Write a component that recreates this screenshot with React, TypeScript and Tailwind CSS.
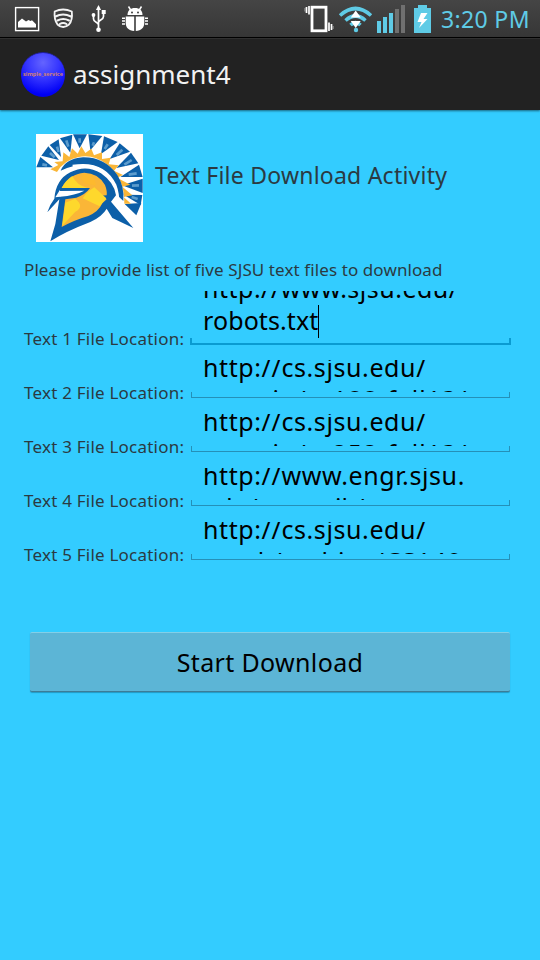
import React from "react";

const FIELDS = [
  { label: "Text 1 File Location:", lines: ["http://www.sjsu.edu/", "robots.txt"], active: true, tracking: "tracking-[0.1px]" },
  { label: "Text 2 File Location:", lines: ["http://cs.sjsu.edu/", "~austin/cs188-fall13/"], active: false, tracking: "tracking-[0.95px]" },
  { label: "Text 3 File Location:", lines: ["http://cs.sjsu.edu/", "~austin/cs252-fall13/"], active: false, tracking: "tracking-[0.95px]" },
  { label: "Text 4 File Location:", lines: ["http://www.engr.sjsu.", "edu/~sestnik/"], active: false, tracking: "tracking-[0.1px]" },
  { label: "Text 5 File Location:", lines: ["http://cs.sjsu.edu/", "~mak/archive/CS149"], active: false, tracking: "tracking-[1.050px]" },
];

function LeftIcons() {
  return (
    <svg className="block h-[37px] w-[160px]" viewBox="0 0 160 37" fill="none">
      <rect x="15.6" y="7.6" width="23" height="23" stroke="#fff" strokeWidth="1.4" />
      <path d="M18 27.5V22l4-3.5 4 3 2.500-1.500 2 1 1.500-.8 4 4v3.300z" fill="#fff" />
      <g stroke="#f4f4f4" strokeLinecap="round">
        <path d="M54.700 11.500Q63 7.500 71.800 11.500Q72.800 20 69 24.500Q66 27 63.200 27Q60 27 57.500 24.500Q53.800 19 54.700 11.500Z" strokeWidth="1.800" />
        <path d="M55.500 16.500Q63 12.500 71 16.500" strokeWidth="2" />
        <path d="M57.500 20.500Q63.200 17.500 69 20.500" strokeWidth="2" />
        <path d="M59.800 24Q63.200 21.800 66.500 24" strokeWidth="2" />
      </g>
      <g stroke="#fff" strokeWidth="1.700">
        <path d="M98.500 9v20M98.500 25c0-3-5-2.500-5-6v-3M98.500 22.500c0-2.500 5-2.500 5-6V12" />
        <path d="M98.500 5l-2.600 5h5.200z" fill="#fff" stroke="none" />
        <circle cx="98.500" cy="29.700" r="2.300" fill="#fff" stroke="none" />
        <circle cx="93.500" cy="15" r="1.900" fill="#fff" stroke="none" />
        <rect x="101.700" y="10" width="4" height="4" fill="#fff" stroke="none" />
      </g>
      <g fill="#fff">
        <path d="M127.500 15c0-4.500 3-7 7.500-7s7.500 2.500 7.500 7z" />
        <path d="M128.500 6.500l2.500 4M141.500 6.500l-2.500 4" stroke="#fff" strokeWidth="1.500" />
        <path d="M125.700 16.500h8.500v14.500c-5.500 0-8.500-3.500-8.500-8.200zM135.800 16.500h8.500v6.300c0 4.700-3 8.200-8.500 8.200z" />
        <path d="M122 18.300h3M122 21.100h3M122 23.900h3M145 18.300h3M145 21.100h3M145 23.900h3" stroke="#fff" strokeWidth="1.500" />
        <circle cx="132" cy="12.500" r="1" fill="#404040" />
        <circle cx="138" cy="12.500" r="1" fill="#404040" />
      </g>
    </svg>
  );
}

function RightIcons() {
  return (
    <svg className="block h-[37px] w-[134px]" viewBox="304 0 134 37" fill="none">
      <rect x="312" y="7.200" width="14" height="23.600" stroke="#fff" strokeWidth="2.800" />
      <path d="M309 6v8.500M306.500 7v6M329 22.500V31M331.500 24v6" stroke="#fff" strokeWidth="1.700" />
      <path d="M305 8v3.500M333 26v3" stroke="#aaa" strokeWidth="1" />
      <g stroke="#5fcbe6" strokeWidth="3.600">
        <path d="M340 15.500Q355.500 1.500 371 15.500" />
        <path d="M345.500 20.500Q355.500 11.500 365.500 20.500" />
        <path d="M350.500 25Q355.500 20.500 360.500 25" />
      </g>
      <circle cx="356" cy="30" r="2.200" fill="#5fcbe6" />
      <path d="M355.700 10.500l5 7h-10zM350.700 21h10l-5 7z" fill="#fff" />
      <g fill="#5fcbe6">
        <path d="M377 21h4v12h-4zM383 17h4v16h-4zM389 13h4v20h-4z" />
        <path d="M418 5h9v3h4v25h-17V8h4z" />
      </g>
      <path d="M395 9h4v24h-4zM401 5h4v28h-4z" fill="#707070" />
      <path d="M421 13l-3.500 9h4l-2.500 6 8.500-9h-4l4-6z" fill="#fff" />
    </svg>
  );
}

function SpartanLogo() {
  return (
    <svg className="block h-[108px] w-[107px] shrink-0" viewBox="33 27 321 324" preserveAspectRatio="none">
      <rect x="33" y="27" width="321" height="324" fill="#fff" />
      <g fill="#0c5fa8">
        <path d="M34 127L46 96L84 127Z" />
        <path d="M49 92L70 64L102 105Z" />
        <path d="M74 60L101 43L108 96Z" />
        <path d="M105 40L142 29L136 83Z" />
        <path d="M144 28H186L164 70Z" />
        <path d="M190 28L232 33L196 76Z" />
        <path d="M237 34L278 51L228 87Z" />
        <path d="M284 55L315 80L254 102Z" />
        <path d="M318 83L340 115L274 129Z" />
        <path d="M342 119L353 156L286 156Z" />
        <path d="M353 161V204L291 181Z" />
        <path d="M352 210L347 240L296 209Z" />
        <path d="M349 234L334 271L299 237Z" />
      </g>
      <path
        d="M52 118l14 3M75 84l14 13M96 65l5 16M124 46l6 19M164 40v13M207 52l-4 10M248 58l-9 14M292 74l-17 16M320 105l-22 14M335 145l-24 4M342 181l-21 1M338 222l-18-6"
        stroke="#5c9ccd"
        strokeWidth="8"
      />
      <path
        d="M76 133L100 120L88 111L113 109L115 82L133 96L141 70L158 86L169 64L181 84L199 71L207 91L231 82L231 102L257 98L251 118L281 121L267 137L294 150L276 158L316 179L292 185L322 211L296 216L318 236H298Q299 158 245 118Q205 87 161 96Q117 105 96 141Z"
        fill="#fab637"
      />
      <path
        d="M107 137Q122 101 174 97Q239 96 277 150Q299 185 295 228L279 213Q276 169 239 138Q186 101 107 137Z"
        fill="#0c5fa8"
      />
      <path d="M143 123Q236 108 271 181Q280 205 280 238" fill="none" stroke="#fff" strokeWidth="7" />
      <path
        d="M67 262Q74 239 88 221Q93 163 136 142Q183 117 228 145Q268 173 273 211L258 230L325 309L262 279L245 251Q232 274 196 291Q120 320 76 349L91 297L103 223Z"
        fill="#0c5fa8"
      />
      <path
        d="M110 189Q133 147 178 143Q220 144 240 180Q247 198 245 211L225 212L245 223L232 235Q221 260 190 273Q151 284 110 306L121 223L154 218Q182 208 195 189Z"
        fill="#fab637"
      />
      <path d="M110 189Q120 167 142 153Q156 182 188 189ZM121 233L151 221Q180 245 151 260L112 302ZM173 220Q184 202 208 187L244 220L224 244Z" fill="#fed82c" />
      <path d="M184 147Q208 146 213 181L181 176Q157 154 184 147Z" fill="#fdb92e" />
      <path d="M102 198L178 197Q152 211 105 215Z" fill="#fff" />
      <path d="M91 217L105 194L106 215Z" fill="#f8fbff" />
    </svg>
  );
}

function FieldRow({ label, lines, active, tracking }: (typeof FIELDS)[number]) {
  return (
    <div className="flex h-[54px] items-end pl-6">
      <div className="h-[19px] w-[166px] whitespace-nowrap text-[17px] leading-[25px] tracking-[0.22px] text-[#2b3a42]">
        {label}
      </div>
      {active ? (
        <div className="flex h-[54px] w-[321px] flex-col">
          <div className="h-[47px] overflow-hidden pl-[13px] text-[25px] leading-[33px] tracking-[0.5px] text-black">
            <div className="-mt-[19px] whitespace-nowrap">{lines[0]}</div>
            <div className="-mt-px flex whitespace-nowrap">
              <span className={tracking}>{lines[1]}</span>
              <span className="mt-px h-[33px] w-px bg-black" />
            </div>
          </div>
          <div className="h-[7px] border-x-2 border-b-2 border-[#0a9bd1]" />
        </div>
      ) : (
        <div className="ml-px flex h-[54px] w-[319px] flex-col pt-[15px]">
          <div className="h-[32px] overflow-hidden pl-3 text-[25px] leading-[33px] tracking-[0.6px] text-black">
            <div className="-mt-[9px] whitespace-nowrap">{lines[0]}</div>
            <div className={`-mt-px whitespace-nowrap ${tracking}`}>{lines[1]}</div>
          </div>
          <div className="h-[6px] border-x border-b border-[#2590b8]" />
        </div>
      )}
    </div>
  );
}

export default function App() {
  return (
    <div className="flex h-[960px] w-[540px] flex-col overflow-hidden bg-[#33ccff] font-['Noto_Sans',sans-serif]">
      <header className="flex h-[38px] items-start justify-between border-b border-black bg-linear-to-b from-[#454545] to-[#363636]">
        <LeftIcons />
        <div className="flex items-start">
          <RightIcons />
          <span className="w-[102px] whitespace-nowrap pl-[3px] text-[23px] leading-[39px] tracking-[0.35px] text-[#5fcbe6]">3:20 PM</span>
        </div>
      </header>
      <div className="flex h-[72px] items-start border-t border-[#303030] bg-[#222222] pl-[21px] shadow-[0_1px_2px_rgba(0,0,0,0.5)]">
        <div className="mt-[13px] flex h-[45px] w-[44px] items-center justify-center rounded-full border-t border-[#2020a0] bg-[radial-gradient(circle_at_50%_22%,#6464ff_0%,#3535ff_40%,#0000f5_78%,#0000cc_100%)]">
          <span className="whitespace-nowrap text-[5.500px] font-bold leading-none text-[#d08070]">simple_service</span>
        </div>
        <h1 className="ml-2 mt-[17px] text-[26px] leading-[36px] text-[#f2f2f2]">assignment4</h1>
      </div>
      <div className="flex h-[150px] items-start pl-9 pt-6">
        <SpartanLogo />
        <h2 className="ml-3 mt-[25px] whitespace-nowrap text-[23px] leading-[32px] tracking-[0.23px] text-[#2b3a42]">
          Text File Download Activity
        </h2>
      </div>
      <p className="h-[31px] whitespace-nowrap pl-6 text-[17px] leading-[20px] tracking-[0.1px] text-[#2b3a42]">
        Please provide list of five SJSU text files to download
      </p>
      <main className="flex flex-col">
        {FIELDS.map((field) => (
          <FieldRow key={field.label} {...field} />
        ))}
      </main>
      <button className="ml-[30px] mt-[71px] h-[60px] w-[480px] rounded-[2px] border-b border-t border-b-[#3d7c96] border-t-[#83cfe8] bg-[#5cb5d6] text-[25px] leading-[34px] tracking-[0.35px] text-black shadow-[0_1px_1px_rgba(0,60,90,0.35)]">
        Start Download
      </button>
    </div>
  );
}
